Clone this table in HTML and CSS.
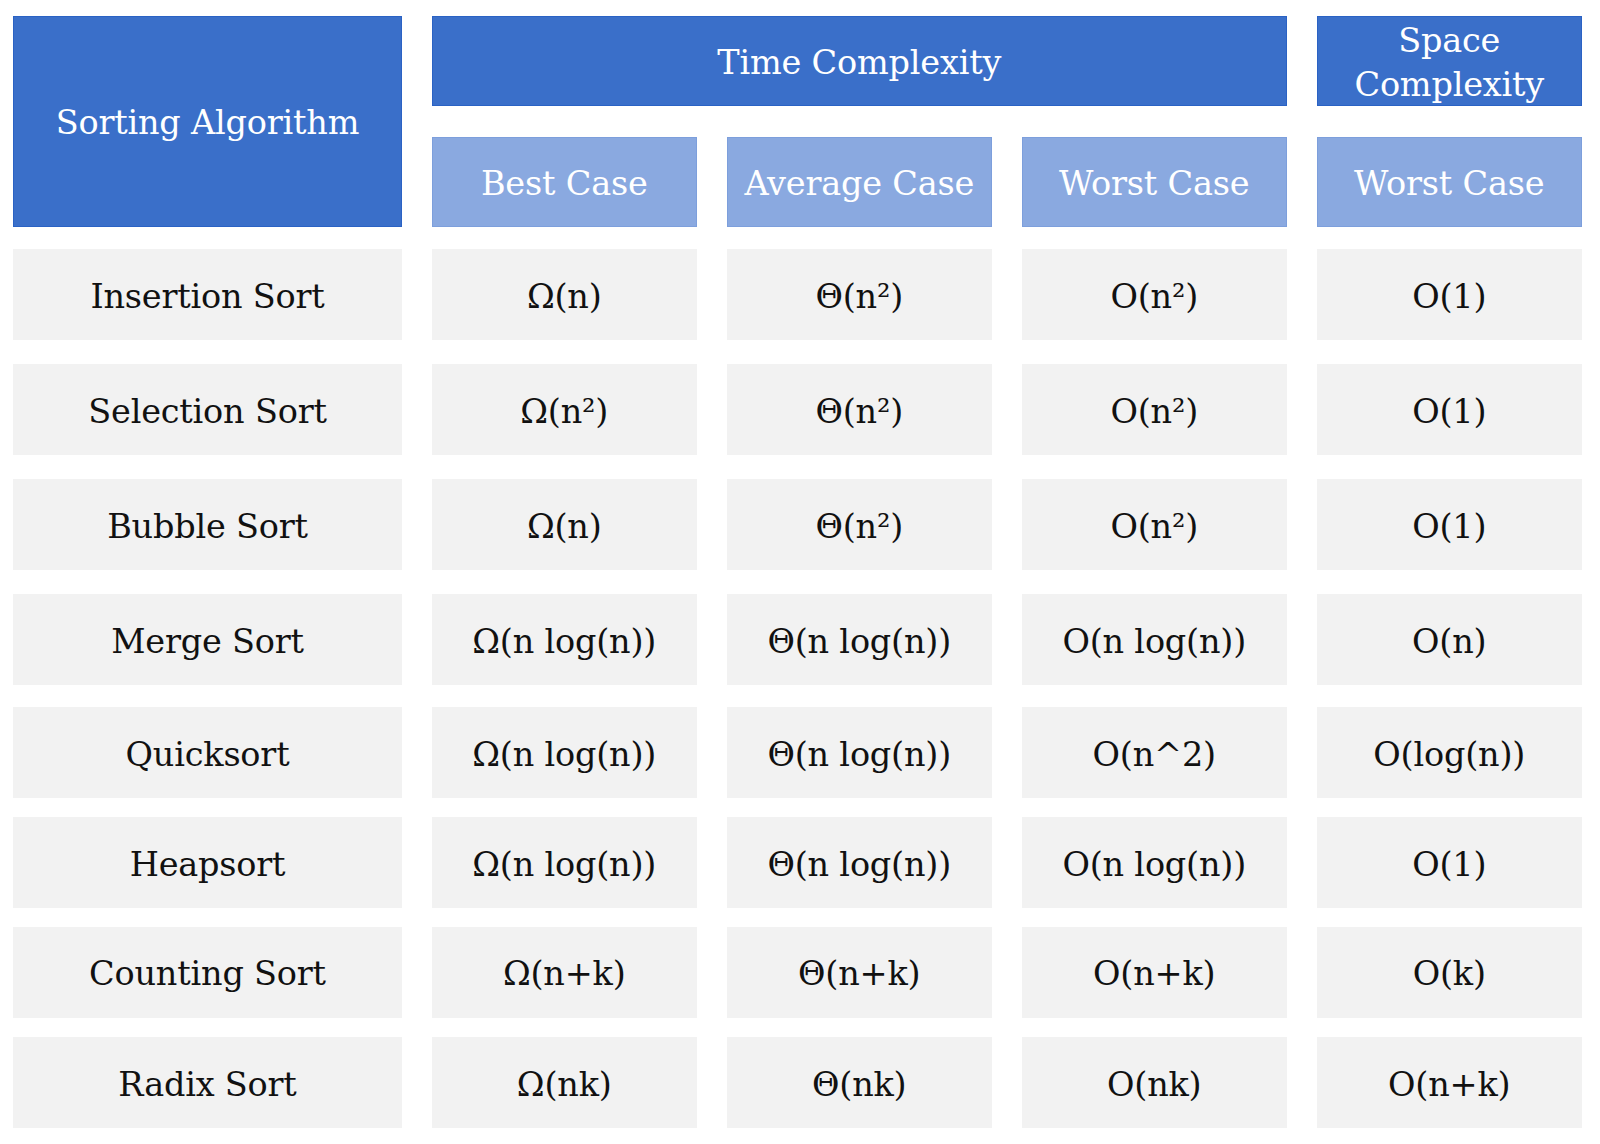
FILE: index.html
```html
<!DOCTYPE html>
<html lang="en">
<head>
<meta charset="utf-8">
<title>Sorting Algorithm Complexity</title>
<link rel="stylesheet" href="styles.css">
</head>
<body>
<div class="table">
  <div class="head">
    <div class="cell dark algo">Sorting Algorithm</div>
    <div class="cell dark time">Time Complexity</div>
    <div class="cell dark space">Space<br>Complexity</div>
    <div class="cell light">Best Case</div>
    <div class="cell light">Average Case</div>
    <div class="cell light">Worst Case</div>
    <div class="cell light">Worst Case</div>
  </div>
  <div class="row r1">
    <div class="cell gray">Insertion Sort</div>
    <div class="cell gray">Ω(n)</div>
    <div class="cell gray">Θ(n²)</div>
    <div class="cell gray">O(n²)</div>
    <div class="cell gray">O(1)</div>
  </div>
  <div class="row r2">
    <div class="cell gray">Selection Sort</div>
    <div class="cell gray">Ω(n²)</div>
    <div class="cell gray">Θ(n²)</div>
    <div class="cell gray">O(n²)</div>
    <div class="cell gray">O(1)</div>
  </div>
  <div class="row r3">
    <div class="cell gray">Bubble Sort</div>
    <div class="cell gray">Ω(n)</div>
    <div class="cell gray">Θ(n²)</div>
    <div class="cell gray">O(n²)</div>
    <div class="cell gray">O(1)</div>
  </div>
  <div class="row r4">
    <div class="cell gray">Merge Sort</div>
    <div class="cell gray">Ω(n log(n))</div>
    <div class="cell gray">Θ(n log(n))</div>
    <div class="cell gray">O(n log(n))</div>
    <div class="cell gray">O(n)</div>
  </div>
  <div class="row r5">
    <div class="cell gray">Quicksort</div>
    <div class="cell gray">Ω(n log(n))</div>
    <div class="cell gray">Θ(n log(n))</div>
    <div class="cell gray">O(n^2)</div>
    <div class="cell gray">O(log(n))</div>
  </div>
  <div class="row r6">
    <div class="cell gray">Heapsort</div>
    <div class="cell gray">Ω(n log(n))</div>
    <div class="cell gray">Θ(n log(n))</div>
    <div class="cell gray">O(n log(n))</div>
    <div class="cell gray">O(1)</div>
  </div>
  <div class="row r7">
    <div class="cell gray">Counting Sort</div>
    <div class="cell gray">Ω(n+k)</div>
    <div class="cell gray">Θ(n+k)</div>
    <div class="cell gray">O(n+k)</div>
    <div class="cell gray">O(k)</div>
  </div>
  <div class="row r8">
    <div class="cell gray">Radix Sort</div>
    <div class="cell gray">Ω(nk)</div>
    <div class="cell gray">Θ(nk)</div>
    <div class="cell gray">O(nk)</div>
    <div class="cell gray">O(n+k)</div>
  </div>
</div>
</body>
</html>
```
FILE: styles.css
```css
html, body {
  margin: 0;
  padding: 0;
  background: #ffffff;
}

body {
  font-family: "DejaVu Serif", "Liberation Serif", serif;
  font-size: 33.5px;
  color: #111111;
}

.table {
  padding: 16px 0 0 13px;
}

.head,
.row {
  display: grid;
  grid-template-columns: 389px 265.5px 265.5px 265.5px 265.5px;
  column-gap: 29.5px;
}

.head {
  grid-template-rows: 90px 90px;
  row-gap: 30.5px;
}

.row {
  height: 90.7px;
}

.r1 { margin-top: 22.5px; }
.r2 { margin-top: 24.4px; }
.r3 { margin-top: 24.4px; }
.r4 { margin-top: 24.4px; }
.r5 { margin-top: 22.5px; }
.r6 { margin-top: 19.3px; }
.r7 { margin-top: 18.8px; }
.r8 { margin-top: 19.5px; }

.cell {
  display: flex;
  align-items: center;
  justify-content: center;
  text-align: center;
  box-sizing: border-box;
  padding-top: 4px;
  line-height: 1.3;
  letter-spacing: -0.2px;
}

.dark {
  background: #3a6fc9;
  color: #ffffff;
  border: 1px solid #2a62c4;
}

.algo {
  grid-row: 1 / 3;
}

.time {
  grid-column: 2 / 5;
}

.light {
  background: #8aa9e0;
  color: #ffffff;
  border: 1px solid #7d9fdc;
}

.gray {
  background: #f2f2f2;
  color: #111111;
}
```
